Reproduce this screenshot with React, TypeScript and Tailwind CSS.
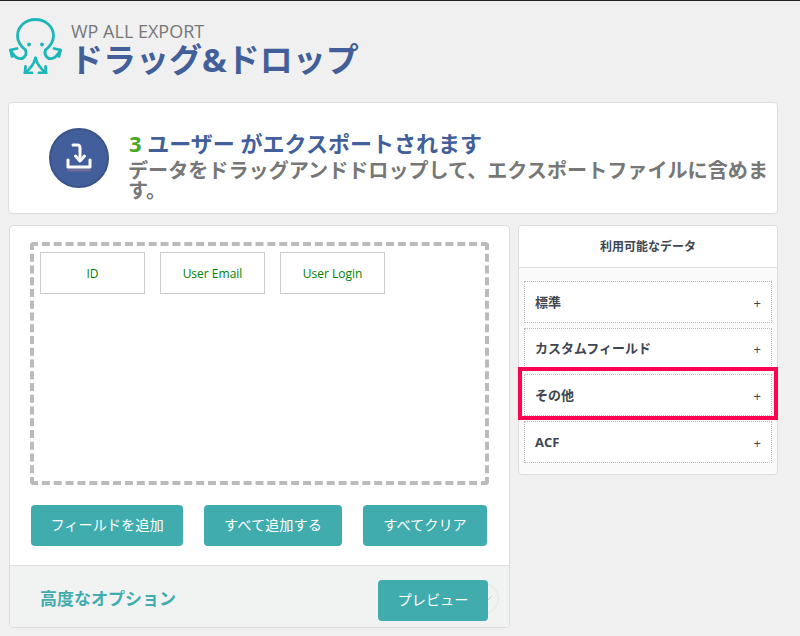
function Octopus() {
  return (
    <svg width="54" height="56" viewBox="9 18 54 56" fill="none" stroke="#1db6b9" strokeWidth="2.8" strokeLinecap="round" strokeLinejoin="round" className="shrink-0">
      <path d="M25.5 50 C 20 45.5 17.5 41 17.5 36 C 17.5 26 26 19.5 35.5 19.5 C 45 19.5 53.5 26 53.5 36 C 53.5 41 51 45.5 45.5 50" />
      <path d="M25.5 50 C 27.5 55 23.5 59.5 19 58.5 C 15 57.5 12.5 54 10.5 50" />
      <path d="M45.5 50 C 43.5 55 47.5 59.5 52 58.5 C 56 57.5 58.5 54 60.5 50" />
      <path d="M17 48.5 L10.5 50 L12 56.5" />
      <path d="M54 48.5 L60.5 50 L59 56.5" />
      <path d="M35.5 58 C 34 64 30 69 25 73" />
      <path d="M35.5 58 C 37 64 41 69 46 73" />
      <path d="M25.5 66.5 L25 73 L32 73" />
      <path d="M45.5 66.5 L46 73 L39 73" />
      <circle cx="29" cy="44.5" r="1.9" fill="#1db6b9" stroke="none" />
      <circle cx="42" cy="44.5" r="1.9" fill="#1db6b9" stroke="none" />
    </svg>
  );
}

function DownloadIcon() {
  return (
    <svg width="26" height="30" viewBox="0 0 26 30" fill="none" strokeLinecap="round" strokeLinejoin="round">
      <path d="M2.5 25 H23.5" stroke="#6f6a94" strokeWidth="3" transform="translate(0 2)" />
      <path d="M2 17 V24 H24 V17" stroke="#ffffff" strokeWidth="3" />
      <path d="M7 2 H11.5 C 13.5 2 14 3.5 14 5 V17" stroke="#ffffff" strokeWidth="3" />
      <path d="M9.5 13 L14 18 L18.5 13" stroke="#ffffff" strokeWidth="3" />
    </svg>
  );
}

function Field({ label }: { label: string }) {
  return (
    <div className="w-[105px] h-[42px] pt-[2px] border border-[#ccc] bg-white flex items-center justify-center text-[12px] text-[#008000]">
      {label}
    </div>
  );
}

function Accordion({ label }: { label: string }) {
  return (
    <div className="h-[42px] border border-dotted border-[#bbb] bg-white flex items-center justify-between pl-[10px] pr-[10px]">
      <span className="text-[13px] font-bold text-[#40464f] leading-none">{label}</span>
      <span className="text-[13px] text-[#40464f] leading-none pt-[2px]">+</span>
    </div>
  );
}

function Btn({ label, w }: { label: string; w: string }) {
  return (
    <button className={`${w} h-[41px] pb-[1px] rounded-[4px] bg-[#40acae] text-white text-[14.2px] flex items-center justify-center`}>
      {label}
    </button>
  );
}

export default function App() {
  return (
    <div className="relative w-[800px] h-[636px] overflow-hidden bg-[#f0f0f0] border-t border-[#1d2327] font-['Open_Sans','Noto_Sans_CJK_JP',sans-serif]">
      <header className="h-[101px] pl-[9px] pt-[17px] flex items-start gap-[8px]">
        <Octopus />
        <div className="pt-[3px]">
          <div className="text-[18px] leading-[20px] text-[#777]">WP ALL EXPORT</div>
          <div className="text-[33px] leading-[38px] font-bold text-[#435f9a] -ml-[1px]">ドラッグ&amp;ドロップ</div>
        </div>
      </header>

      <section className="ml-[8px] w-[770px] h-[112px] bg-white border border-[#ddd] rounded-[4px] flex items-start pl-[40px] pr-[6px]">
        <div className="shrink-0 mt-[25px] w-[60px] h-[60px] rounded-full bg-[#425f9b] border-2 border-[#3a5488] flex items-center justify-center">
          <DownloadIcon />
        </div>
        <div className="ml-[20px] pt-[27px]">
          <div className="text-[22px] leading-[26px] font-semibold text-[#425f9b]">
            <span className="text-[#46a91f] font-bold">3</span> ユーザー がエクスポートされます
          </div>
          <div className="text-[20.1px] leading-[20px] font-semibold text-[#777] mt-[5px] -ml-[1px]">
            データをドラッグアンドドロップして、エクスポートファイルに含めます。
          </div>
        </div>
      </section>

      <div className="mt-[11px] flex items-start">
        <main className="ml-[9px] w-[501px] h-[403px] bg-white border border-[#ddd] rounded-[4px] flex flex-col">
          <div className="pt-[16px] px-[20px]">
            <div className="h-[243px] w-[459px] border-4 border-dashed border-[#bbb] rounded-[4px] pl-[6px] pt-[6px] flex items-start gap-[15px]">
              <Field label="ID" />
              <Field label="User Email" />
              <Field label="User Login" />
            </div>
            <div className="mt-[20px] ml-[1px] flex gap-[21px]">
              <Btn label="フィールドを追加" w="w-[152px]" />
              <Btn label="すべて追加する" w="w-[138px]" />
              <Btn label="すべてクリア" w="w-[124px]" />
            </div>
          </div>
          <div className="mt-[19px] flex-1 bg-[#f1f2f2] border-t border-[#ddd] rounded-b-[4px] flex items-center pl-[30px] pt-[3px] relative">
            <span className="text-[17px] font-bold text-[#40acae] leading-none">高度なオプション</span>
            <div className="absolute left-[458px] top-[17px] w-[31px] h-[31px] rounded-full border border-[#e6e6e6] flex items-center justify-end pr-[6px]">
              <svg width="6" height="5" viewBox="0 0 6 5" fill="none" stroke="#c8c8c8" strokeWidth="1"><path d="M0.5 2.5 L2 4 L5.5 0.5" /></svg>
            </div>
            <button className="absolute left-[368px] top-[14px] w-[110px] h-[41px] pb-[2px] rounded-[4px] bg-[#40acae] text-white text-[14.2px]">プレビュー</button>
          </div>
        </main>

        <aside className="ml-[8px] w-[260px] h-[250px] bg-[#fafafa] border border-[#ddd] rounded-[4px]">
          <div className="h-[42px] pt-[1px] bg-white border-b border-[#ddd] rounded-t-[4px] flex items-center justify-center text-[12px] font-semibold text-[#40464f]">
            利用可能なデータ
          </div>
          <div className="pt-[13px] px-[5px] flex flex-col gap-[4.7px]">
            <Accordion label="標準" />
            <Accordion label="カスタムフィールド" />
            <Accordion label="その他" />
            <Accordion label="ACF" />
          </div>
        </aside>
      </div>

      <div className="absolute left-[518px] top-[366px] w-[260px] h-[53px] border-4 border-[#ff0052]" />
    </div>
  );
}
